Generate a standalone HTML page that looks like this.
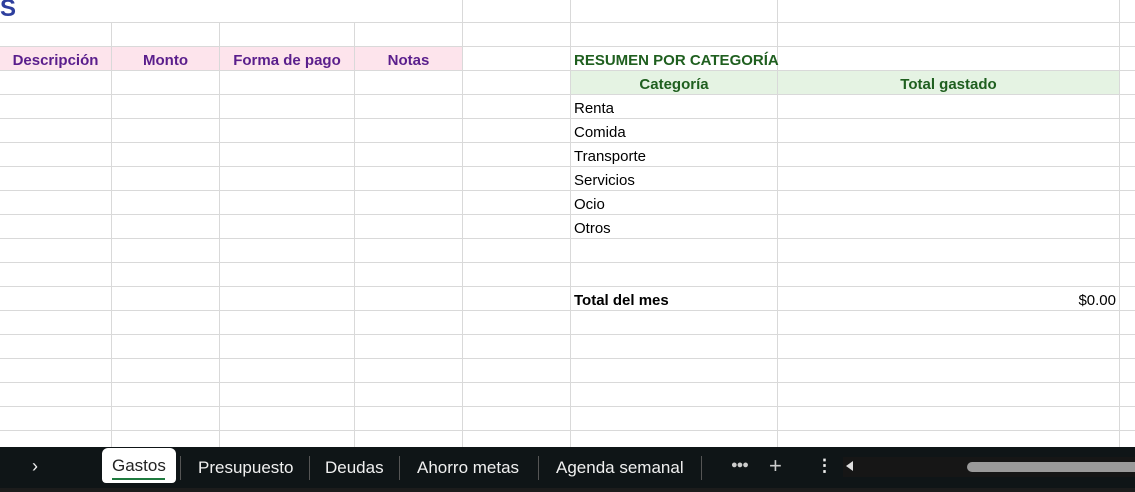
<!DOCTYPE html>
<html><head><meta charset="utf-8"><style>
*{margin:0;padding:0;box-sizing:border-box}
body{width:1135px;height:492px;overflow:hidden;background:#fff;font-family:"Liberation Sans",Arial,sans-serif;position:relative}
.rows{position:absolute;left:0;top:22px;width:1135px;height:425px;background:repeating-linear-gradient(to bottom,#d9d9d9 0,#d9d9d9 1px,transparent 1px,transparent 24px)}
.v{position:absolute;top:0;height:447px;width:1px;background:#d9d9d9}
.c{position:absolute;height:23px;line-height:27px;font-size:15px;white-space:nowrap}
.ph{background:#fde4ec;color:#5a1e8c;font-weight:bold;text-align:center;top:47px}
.gh{background:#e5f3e3;color:#1f5f1f;font-weight:bold;text-align:center;top:71px}
.tab{position:absolute;top:458px;color:#f0f0f0;font-size:17px}
.sep{position:absolute;top:456px;width:1px;height:24px;background:#555}
</style></head><body>
<div class="rows"></div>
<div class="v" style="left:111px"></div><div class="v" style="left:219px"></div><div class="v" style="left:354px"></div><div class="v" style="left:462px"></div><div class="v" style="left:570px"></div><div class="v" style="left:777px"></div><div class="v" style="left:1119px"></div>
<div style="position:absolute;left:0;top:0;width:1135px;height:22px;background:#fff"></div>
<div class="v" style="left:462px;height:22px"></div><div class="v" style="left:570px;height:22px"></div><div class="v" style="left:777px;height:22px"></div><div class="v" style="left:1119px;height:22px"></div>
<div style="position:absolute;left:0;top:-5px;font-size:24px;font-weight:bold;color:#2e3f9e">S</div>
<div class="c ph" style="left:0;width:111px">Descripción</div>
<div class="c ph" style="left:112px;width:107px">Monto</div>
<div class="c ph" style="left:220px;width:134px">Forma de pago</div>
<div class="c ph" style="left:355px;width:107px">Notas</div>
<div class="c" style="left:574px;top:47px;color:#1f5f1f;font-weight:bold">RESUMEN POR CATEGORÍA</div>
<div class="c gh" style="left:571px;width:206px">Categoría</div>
<div class="c gh" style="left:778px;width:341px">Total gastado</div>
<div class="c" style="left:574px;top:95px">Renta</div>
<div class="c" style="left:574px;top:119px">Comida</div>
<div class="c" style="left:574px;top:143px">Transporte</div>
<div class="c" style="left:574px;top:167px">Servicios</div>
<div class="c" style="left:574px;top:191px">Ocio</div>
<div class="c" style="left:574px;top:215px">Otros</div>
<div class="c" style="left:574px;top:287px;font-weight:bold">Total del mes</div>
<div class="c" style="left:778px;width:338px;top:287px;text-align:right">$0.00</div>
<div style="position:absolute;left:0;top:447px;width:1135px;height:41px;background:#0f1517"></div>
<div style="position:absolute;left:0;top:488px;width:1135px;height:4px;background:#1c1c1c"></div>
<div class="tab" style="left:32px;top:456px;font-size:18px">›</div>
<div style="position:absolute;left:102px;top:448px;width:74px;height:35px;background:#fff;border-radius:6px 6px 4px 4px"></div>
<div class="tab" style="left:112px;top:456px;color:#222">Gastos</div>
<div style="position:absolute;left:112px;top:478px;width:53px;height:2px;background:#1e7a3e"></div>
<div class="sep" style="left:180px"></div>
<div class="tab" style="left:198px">Presupuesto</div>
<div class="sep" style="left:309px"></div>
<div class="tab" style="left:325px">Deudas</div>
<div class="sep" style="left:399px"></div>
<div class="tab" style="left:417px">Ahorro metas</div>
<div class="sep" style="left:538px"></div>
<div class="tab" style="left:556px">Agenda semanal</div>
<div class="sep" style="left:701px"></div>
<div class="tab" style="left:731px;top:459px;font-size:11px;letter-spacing:-1px;color:#ccc">●●●</div>
<div class="tab" style="left:769px;top:453px;font-size:22px;color:#ccc">+</div>
<div class="tab" style="left:816px;top:456px;font-weight:bold">⋮</div>
<div style="position:absolute;left:843px;top:457px;width:292px;height:20px;background:#161616"></div>
<div style="position:absolute;left:846px;top:461px;width:0;height:0;border-top:5px solid transparent;border-bottom:5px solid transparent;border-right:7px solid #ddd"></div>
<div style="position:absolute;left:967px;top:462px;width:180px;height:10px;background:#9a9a9a;border-radius:5px"></div>
</body></html>
